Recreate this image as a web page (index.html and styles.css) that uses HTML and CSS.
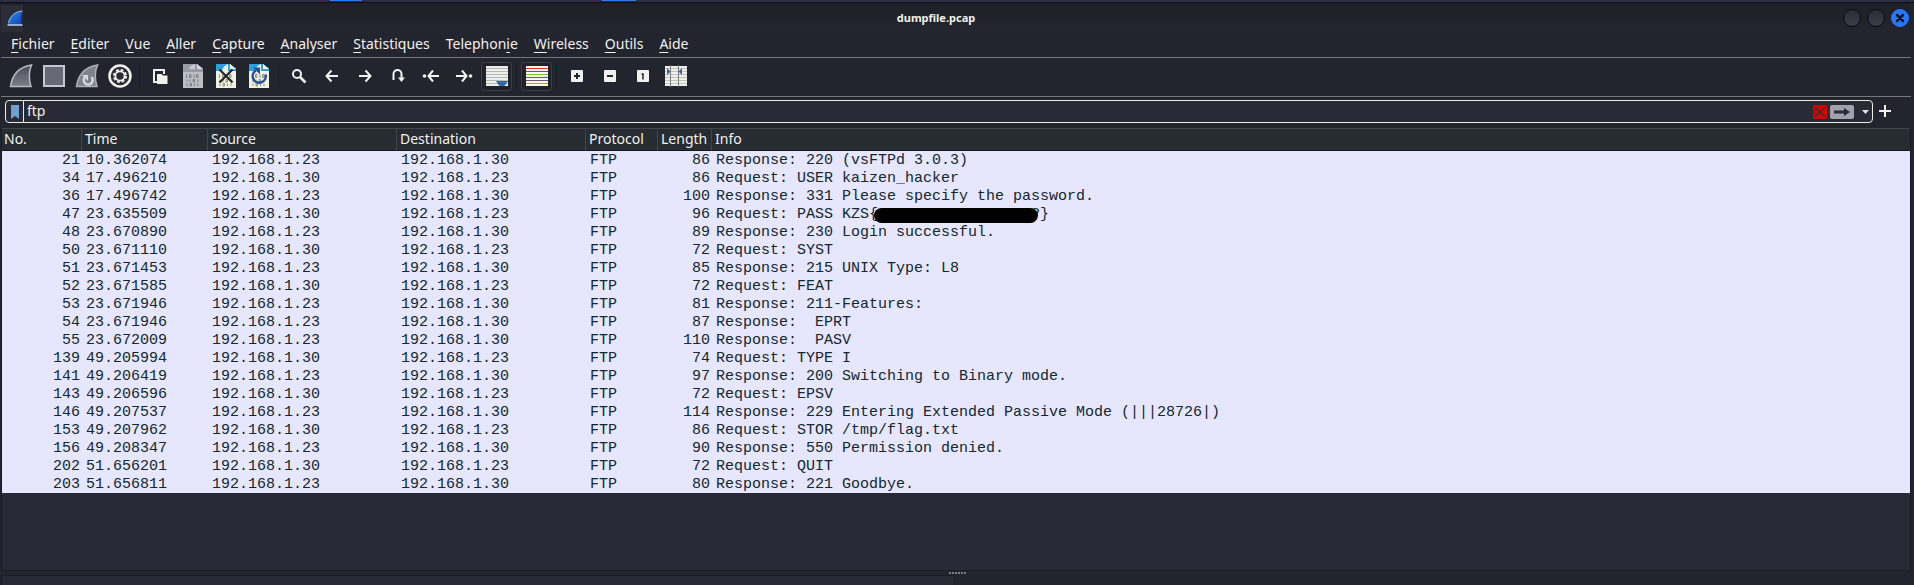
FILE: index.html
```html
<!DOCTYPE html>
<html lang="fr">
<head>
<meta charset="utf-8">
<title>dumpfile.pcap</title>
<link rel="stylesheet" href="styles.css">
</head>
<body>
<svg width="0" height="0" class="defs" aria-hidden="true">
  <defs>
    <linearGradient id="gFin" x1="0" y1="0" x2="0" y2="1"><stop offset="0" stop-color="#4a4d57"/><stop offset="1" stop-color="#7b7e88"/></linearGradient>
    <linearGradient id="gBlue" x1="0" y1="0" x2="1" y2="1"><stop offset="0" stop-color="#2f8df5"/><stop offset="1" stop-color="#0c3fae"/></linearGradient>
    <g id="bits" fill="none" stroke-width="1">
      <path d="M4 10.500V14M7 10.500h1.500v3H7zM11.500 10.500V14M14 10.500h1.500v3H14zM4.500 15.500V18M7.500 15.500V18M10.500 15.500H12v2.500h-1.500zM15.500 15.500V18M4.500 19.500V22M7.500 19.500H9V22H7.500zM12 19.500V22M15.500 19.500V22"/>
    </g>
  </defs>
</svg>
<div class="desk-strip"><i class="task task-a"></i><i class="task task-b"></i></div>
<div class="window">
  <header class="titlebar">
    <span class="app-icon"><svg width="16" height="16" viewBox="0 0 16 16"><path d="M1 15C2 7 8 1.500 15.500 1C13.500 5 13.500 11 14.500 15z" fill="url(#gBlue)"/><path d="M1.500 13C3 6 8 1.500 15.500 1" fill="none" stroke="#9fc4f5"/><path d="M.5 15h15" stroke="#c3d2ea" stroke-width="1.500"/></svg></span>
    <h1>dumpfile.pcap</h1>
    <div class="controls">
      <button class="ctl" aria-label="Minimiser"></button>
      <button class="ctl" aria-label="Maximiser"></button>
      <button class="ctl close" aria-label="Fermer"><svg width="10" height="10" viewBox="0 0 10 10"><path d="M2 2l6 6M8 2L2 8" stroke="#10141f" stroke-width="2.500" stroke-linecap="round"/></svg></button>
    </div>
  </header>
  <nav class="menu">
    <button><u>F</u>ichier</button><button><u>E</u>diter</button><button><u>V</u>ue</button><button><u>A</u>ller</button><button><u>C</u>apture</button><button><u>A</u>nalyser</button><button><u>S</u>tatistiques</button><button>Telephon<u>i</u>e</button><button><u>W</u>ireless</button><button><u>O</u>utils</button><button><u>A</u>ide</button>
  </nav>
  <div class="toolbar">
    <button aria-label="Démarrer"><svg viewBox="0 0 24 24"><path d="M1.500 22.500C3 12 9 3 22.500 1C19.500 8 20 16 22 22.500z" fill="url(#gFin)" stroke="#b9bbc3" stroke-width="1.500"/></svg></button>
    <button aria-label="Arrêter"><svg viewBox="0 0 24 24"><path d="M2 2h20v20H2z" fill="#676a76" stroke="#c6c7cf" stroke-width="2"/></svg></button>
    <button aria-label="Redémarrer"><svg viewBox="0 0 24 24"><path d="M1.500 22.500C3 12 9 3 22.500 1C19.500 8 20 16 22 22.500z" fill="#7e818b" stroke="#aeb0b8" stroke-width="1.500"/><path d="M16.500 13A4.500 4.500 0 1 1 9.500 13.500" fill="none" stroke="#d9dade" stroke-width="2.500"/><path d="M7 11h6v6z" fill="#d9dade"/></svg></button>
    <button aria-label="Options"><svg viewBox="0 0 24 24"><circle cx="12" cy="12" r="10.500" fill="#2d2d31" stroke="#f0f0ee" stroke-width="2.500"/><circle cx="12" cy="12" r="5.800" fill="none" stroke="#eee" stroke-width="2.600" stroke-dasharray="2.600 1.950"/><circle cx="12" cy="12" r="4.600" fill="#2d2d31" stroke="#eee" stroke-width="1.800"/></svg></button>
    <i class="sep"></i>
    <button aria-label="Ouvrir"><svg viewBox="0 0 24 24"><path d="M9 18H6V6h10v4" fill="none" stroke="#f2f1ee" stroke-width="2"/><path d="M9 10h4.500l1.500 1.500h4.500V20H9z" fill="#f2f1ee"/></svg></button>
    <button aria-label="Enregistrer"><svg viewBox="0 0 24 24"><path d="M2 0h14l6 5v19H2z" fill="#bdbec4"/><path d="M2 0h14l6 5v3H2z" fill="#989ba6"/><path d="M8 5c1-3 3-4 6-5v5z" fill="#c9cad0"/><path d="M16 0v5h6z" fill="#d8d9dd"/><use href="#bits" x="1.500" stroke="#7b7e88"/></svg></button>
    <button aria-label="Fermer le fichier"><svg viewBox="0 0 24 24"><path d="M2 0h14l6 5v19H2z" fill="#f1f1df"/><path d="M2 0h14l6 5v2H2z" fill="#2e9fe0"/><path d="M8 7c1-4 3-6 6-7v7z" fill="#f1f1df"/><path d="M16 0v5h6z" fill="#fff"/><use href="#bits" x="1.500" stroke="#8f8f84"/><path d="M5.500 5.500l13 13M18.500 5.500l-13 13" stroke="#26282c" stroke-width="2.200"/></svg></button>
    <button aria-label="Recharger"><svg viewBox="0 0 24 24"><path d="M2 0h14l6 5v19H2z" fill="#f1f1df"/><path d="M2 0h14l6 5v2H2z" fill="#2e9fe0"/><path d="M8 7c1-4 3-6 6-7v7z" fill="#f1f1df"/><path d="M16 0v5h6z" fill="#fff"/><use href="#bits" x="1.500" stroke="#8f8f84"/><path d="M18.500 10.500A6.500 6.500 0 1 1 9 6.500" fill="none" stroke="#24509a" stroke-width="2.500"/><path d="M6 3.500h7v7z" fill="#24509a"/></svg></button>
    <i class="sep"></i>
    <button aria-label="Rechercher"><svg viewBox="0 0 24 24"><circle cx="10" cy="10" r="4" fill="none" stroke="#f2f1ee" stroke-width="2"/><path d="M13 13l5.500 5.500" stroke="#f2f1ee" stroke-width="2.600"/></svg></button>
    <button aria-label="Précédent"><svg viewBox="0 0 24 24" class="line"><path d="M18 12H7M11.500 6.500L6.500 12l5 5.500"/></svg></button>
    <button aria-label="Suivant"><svg viewBox="0 0 24 24" class="line"><path d="M6 12h11M12.500 6.500l5 5.500-5 5.500"/></svg></button>
    <button aria-label="Aller au paquet"><svg viewBox="0 0 24 24" class="line"><path d="M7.500 16V10a4 4 0 0 1 8 0v5"/><path d="M12 13.500h7L15.500 18z" fill="#f2f1ee" stroke="none"/></svg></button>
    <button aria-label="Premier paquet"><svg viewBox="0 0 24 24" class="line"><path d="M20 12H10M14 6.500L9.500 12l4.500 5.500"/><circle cx="5.500" cy="12" r="1.800" fill="#f2f1ee" stroke="none"/></svg></button>
    <button aria-label="Dernier paquet"><svg viewBox="0 0 24 24" class="line"><path d="M4 12h10M10 6.500l4.500 5.500-4.500 5.500"/><circle cx="18.500" cy="12" r="1.800" fill="#f2f1ee" stroke="none"/></svg></button>
    <button class="on" aria-label="Défilement automatique"><svg viewBox="0 0 24 24"><path d="M1 2h22v20H1z" fill="#eeeeec"/><path d="M1 4.500h22M1 7.500h22M1 10.500h22M1 13.500h22M1 16.500h22M1 19.500h22" stroke="#b5b7b0"/><path d="M11 17h12l-3 4.500q-3 1.500-6 0z" fill="#3465a4"/></svg></button>
    <i class="sep"></i>
    <button class="on" aria-label="Coloriser"><svg viewBox="0 0 24 24"><path d="M1 2h22v20H1z" fill="#f5f5f2"/><g><path d="M1 4.500h22" stroke="#ef2929"/><path d="M1 7.500h22" stroke="#3465a4"/><path d="M1 10.500h22" stroke="#73d216"/><path d="M1 13.500h22" stroke="#3465a4"/><path d="M1 16.500h22" stroke="#75507b"/><path d="M1 19.500h22" stroke="#c4a000"/></g></svg></button>
    <i class="sep"></i>
    <button aria-label="Zoom avant"><svg viewBox="0 0 24 24"><rect x="6" y="6" width="12" height="12" rx="1" fill="#f2f1ee"/><path d="M9 12h6M12 9v6" stroke="#24262f" stroke-width="2"/></svg></button>
    <button aria-label="Zoom arrière"><svg viewBox="0 0 24 24"><rect x="6" y="6" width="12" height="12" rx="1" fill="#f2f1ee"/><path d="M9 12h6" stroke="#24262f" stroke-width="2"/></svg></button>
    <button aria-label="Taille normale"><svg viewBox="0 0 24 24"><rect x="6" y="6" width="12" height="12" rx="1" fill="#f2f1ee"/><path d="M10.500 10H12v5.500" fill="none" stroke="#24262f" stroke-width="1.500"/></svg></button>
    <button aria-label="Redimensionner les colonnes"><svg viewBox="0 0 24 24"><path d="M1 2h22v20H1z" fill="#eeeeec"/><path d="M1 4.500h22M1 7.500h22M1 10.500h22M1 13.500h22M1 16.500h22M1 19.500h22" stroke="#c2c3be"/><path d="M6.500 1v22M14.500 1v22" stroke="#7d7f7a"/><path d="M3 4l3.500 3.500L3 11zM18 4l-3.500 3.500L18 11z" fill="#3465a4"/></svg></button>
  </div>
  <div class="filter-row">
    <div class="filter">
      <button class="bookmark" aria-label="Signets"><svg width="8" height="14" viewBox="0 0 8 14"><path d="M0 0h8v14l-4-3-4 3z" fill="#729fcf"/></svg></button>
      <input type="text" value="ftp" aria-label="Filtre d'affichage" spellcheck="false">
      <button class="clear" aria-label="Effacer"><svg width="14" height="14" viewBox="0 0 14 14"><path d="M2.500 2.500l9 9M11.500 2.500l-9 9" stroke="#2e3436" stroke-width="1.500"/></svg></button>
      <button class="apply" aria-label="Appliquer"><svg width="24" height="14" viewBox="0 0 24 14"><path d="M4 5.500h10V3l6 4-6 4V8.500H4z" fill="#2a2c35"/></svg></button>
      <button class="caret" aria-label="Historique"><svg width="7" height="4" viewBox="0 0 7 4"><path d="M0 0h7L3.500 4z" fill="#e6e4de"/></svg></button>
    </div>
    <button class="add" aria-label="Ajouter"><svg width="12" height="12" viewBox="0 0 12 12"><path d="M6 0v12M0 6h12" stroke="#f2f1ee" stroke-width="2"/></svg></button>
  </div>
  <main class="packets">
    <table>
      <colgroup><col class="c-no"><col class="c-time"><col class="c-addr"><col class="c-addr"><col class="c-proto"><col class="c-len"><col></colgroup>
      <thead><tr><th>No.</th><th>Time</th><th>Source</th><th>Destination</th><th>Protocol</th><th>Length</th><th>Info</th></tr></thead>
      <tbody>
        <tr><td>21</td><td>10.362074</td><td>192.168.1.23</td><td>192.168.1.30</td><td>FTP</td><td>86</td><td>Response: 220 (vsFTPd 3.0.3)</td></tr>
        <tr><td>34</td><td>17.496210</td><td>192.168.1.30</td><td>192.168.1.23</td><td>FTP</td><td>86</td><td>Request: USER kaizen_hacker</td></tr>
        <tr><td>36</td><td>17.496742</td><td>192.168.1.23</td><td>192.168.1.30</td><td>FTP</td><td>100</td><td>Response: 331 Please specify the password.</td></tr>
        <tr><td>47</td><td>23.635509</td><td>192.168.1.30</td><td>192.168.1.23</td><td>FTP</td><td>96</td><td>Request: PASS KZS{<span class="redacted">?</span>}</td></tr>
        <tr><td>48</td><td>23.670890</td><td>192.168.1.23</td><td>192.168.1.30</td><td>FTP</td><td>89</td><td>Response: 230 Login successful.</td></tr>
        <tr><td>50</td><td>23.671110</td><td>192.168.1.30</td><td>192.168.1.23</td><td>FTP</td><td>72</td><td>Request: SYST</td></tr>
        <tr><td>51</td><td>23.671453</td><td>192.168.1.23</td><td>192.168.1.30</td><td>FTP</td><td>85</td><td>Response: 215 UNIX Type: L8</td></tr>
        <tr><td>52</td><td>23.671585</td><td>192.168.1.30</td><td>192.168.1.23</td><td>FTP</td><td>72</td><td>Request: FEAT</td></tr>
        <tr><td>53</td><td>23.671946</td><td>192.168.1.23</td><td>192.168.1.30</td><td>FTP</td><td>81</td><td>Response: 211-Features:</td></tr>
        <tr><td>54</td><td>23.671946</td><td>192.168.1.23</td><td>192.168.1.30</td><td>FTP</td><td>87</td><td>Response:  EPRT</td></tr>
        <tr><td>55</td><td>23.672009</td><td>192.168.1.23</td><td>192.168.1.30</td><td>FTP</td><td>110</td><td>Response:  PASV</td></tr>
        <tr><td>139</td><td>49.205994</td><td>192.168.1.30</td><td>192.168.1.23</td><td>FTP</td><td>74</td><td>Request: TYPE I</td></tr>
        <tr><td>141</td><td>49.206419</td><td>192.168.1.23</td><td>192.168.1.30</td><td>FTP</td><td>97</td><td>Response: 200 Switching to Binary mode.</td></tr>
        <tr><td>143</td><td>49.206596</td><td>192.168.1.30</td><td>192.168.1.23</td><td>FTP</td><td>72</td><td>Request: EPSV</td></tr>
        <tr><td>146</td><td>49.207537</td><td>192.168.1.23</td><td>192.168.1.30</td><td>FTP</td><td>114</td><td>Response: 229 Entering Extended Passive Mode (|||28726|)</td></tr>
        <tr><td>153</td><td>49.207962</td><td>192.168.1.30</td><td>192.168.1.23</td><td>FTP</td><td>86</td><td>Request: STOR /tmp/flag.txt</td></tr>
        <tr><td>156</td><td>49.208347</td><td>192.168.1.23</td><td>192.168.1.30</td><td>FTP</td><td>90</td><td>Response: 550 Permission denied.</td></tr>
        <tr><td>202</td><td>51.656201</td><td>192.168.1.30</td><td>192.168.1.23</td><td>FTP</td><td>72</td><td>Request: QUIT</td></tr>
        <tr><td>203</td><td>51.656811</td><td>192.168.1.23</td><td>192.168.1.30</td><td>FTP</td><td>80</td><td>Response: 221 Goodbye.</td></tr>
      </tbody>
    </table>
  </main>
  <div class="splitter"><i></i><i></i><i></i><i></i><i></i><i></i></div>
  <div class="lower"><div class="details"></div><div class="bytes"></div></div>
</div>
</body>
</html>
```
FILE: styles.css
```css
* { box-sizing: border-box; }
body {
  margin: 0;
  height: 100vh;
  display: flex;
  flex-direction: column;
  overflow: hidden;
  background: #22252d;
  color: #f2f1ee;
  font: 14px/20px "Noto Sans", sans-serif;
}
button {
  margin: 0;
  padding: 0;
  border: 0;
  background: none;
  color: inherit;
  font: inherit;
  display: flex;
  align-items: center;
  justify-content: center;
}
svg { display: block; flex: none; }
.defs { position: absolute; }
.desk-strip {
  flex: none;
  display: flex;
  height: 3px;
  padding-left: 330px;
  gap: 240px;
  background: #2f2b45;
  border-bottom: 1px solid #0e0f13;
}
.task { height: 1px; background: #2777ff; }
.task-a { width: 32px; }
.task-b { width: 34px; }
.window {
  flex: 1;
  min-height: 0;
  display: flex;
  flex-direction: column;
  margin-right: 3px;
  margin-left: 1px;
  background: #23252e;
}
.titlebar {
  flex: none;
  display: flex;
  align-items: center;
  height: 30px;
  background: linear-gradient(#1e2027, #23262e);
}
.app-icon {
  display: flex;
  width: 22px;
  padding: 5px 0 6px 6px;
  background: #2b2e36;
}
.titlebar h1 { flex: 1; margin: 0; padding-left: 6px; font-size: 11px; font-weight: 700; text-align: center; }
.controls { display: flex; gap: 6px; padding-right: 2px; }
.ctl {
  width: 18px;
  height: 18px;
  border: 1px solid #07080b;
  border-radius: 50%;
  background: linear-gradient(#2b2e38, #393d48);
}
.close { border-color: #2777ff; background: #2777ff; }
.menu {
  flex: none;
  display: flex;
  gap: 16px;
  height: 25px;
  padding: 1px 10px 3px;
  border-bottom: 1px solid #77747e;
}
.menu u { text-underline-offset: 3px; text-decoration-thickness: 1px; text-decoration-skip-ink: none; }
.toolbar {
  flex: none;
  display: flex;
  align-items: center;
  height: 39px;
  padding: 0 0 2px 3px;
  border-bottom: 1px solid #77777c;
}
.toolbar button { width: 33px; height: 29px; }
.toolbar svg { width: 24px; height: 24px; }
.toolbar .on { width: 31px; margin: 0 1px; border: 1px solid #3d4048; border-radius: 3px; background: #20222a; }
.sep { width: 1px; height: 20px; margin: 0 3px; background: #1d1f26; }
.line { fill: none; stroke: #f2f1ee; stroke-width: 2; }
.filter-row {
  flex: none;
  display: flex;
  gap: 6px;
  height: 31px;
  padding: 3px 20px 5px 4px;
}
.filter {
  flex: 1;
  display: flex;
  align-items: center;
  border: 1px solid #eeece2;
  border-radius: 4px;
  background: #282a35;
}
.bookmark { width: 18px; height: 21px; border-right: 1px solid #eeece2; }
.filter input {
  flex: 1;
  min-width: 0;
  height: 21px;
  padding: 0 3px 2px;
  border: 0;
  outline: 0;
  background: none;
  color: inherit;
  font: inherit;
}
.clear { width: 14px; height: 14px; border-radius: 1px; background: #d40000; }
.apply { width: 24px; height: 14px; margin-left: 3px; border-radius: 2px; background: #a0a2ae; }
.caret { width: 18px; height: 20px; padding-left: 4px; }
.add { padding-bottom: 1px; }
.packets {
  flex: none;
  height: 443px;
  border: 1px solid #1b1c21;
  border-top: 0;
  background: #282a35;
}
table { width: 100%; border-collapse: separate; border-spacing: 0; table-layout: fixed; }
.c-no { width: 80px; }
.c-time { width: 126px; }
.c-addr { width: 189px; }
.c-proto { width: 72px; }
.c-len { width: 54px; }
th {
  height: 23px;
  padding: 0 0 1px 3px;
  border-top: 1px solid #41444b;
  border-bottom: 1px solid #16171c;
  border-right: 1px solid #41444b;
  background: #272b32;
  text-align: left;
  font-weight: 400;
  line-height: 20px;
}
th:first-child { padding-left: 2px; }
th:last-child { border-right: 0; }
td {
  height: 18px;
  padding: 2px 0 0 4px;
  background: #e6e6ff;
  color: #12272e;
  font: 15px/16px "Liberation Mono", monospace;
  white-space: pre;
}
td:nth-child(1), td:nth-child(6) { padding: 2px 2px 0 0; text-align: right; }
.redacted { position: relative; display: inline-block; width: 162px; text-align: right; }
.redacted::before {
  content: "";
  position: absolute;
  inset: 1px 2px 0 -4px;
  border-radius: 8px;
  background: #000;
}
.splitter { flex: none; display: flex; align-items: center; justify-content: center; gap: 1px; height: 4px; padding-left: 2px; }
.splitter i { width: 2px; height: 2px; background: #7b7d84; }
.lower { flex: 1; display: flex; gap: 4px; }
.details { flex: 1; border: 1px solid #1b1c21; border-bottom: 0; background: #282a35; }
.bytes { flex: 1; }
```
